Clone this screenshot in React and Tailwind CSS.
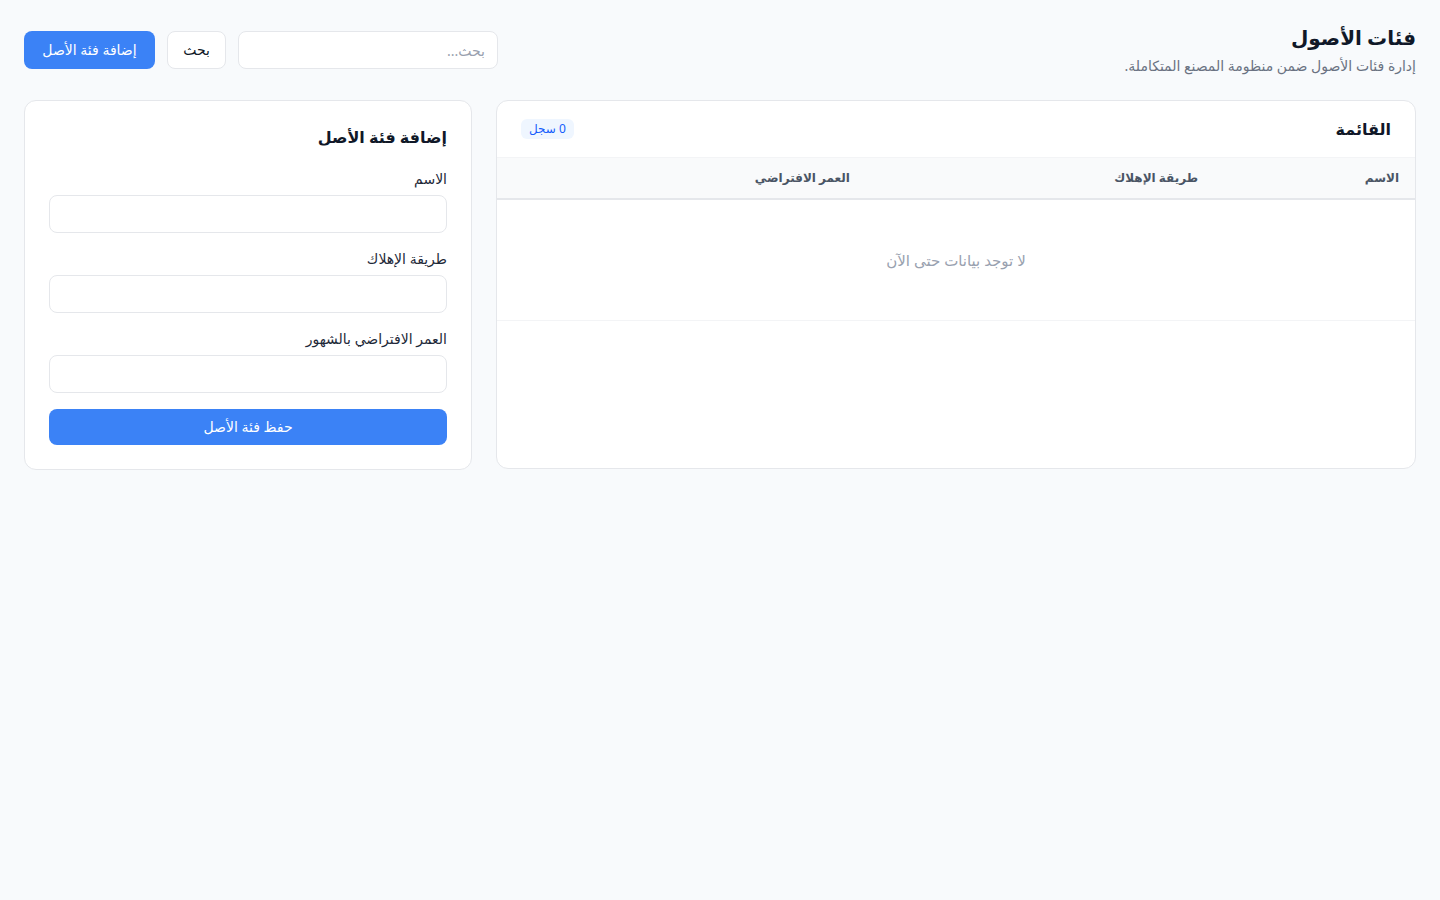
import React from 'react';

const Field = ({ label }) => (
  <div className="flex flex-col gap-1.5">
    <label className="text-sm leading-5 text-gray-800">{label}</label>
    <input className="h-[38px] w-full rounded-lg border border-gray-200 bg-white px-3 text-sm outline-none" />
  </div>
);

export default function App() {
  return (
    <div
      dir="rtl"
      className="min-h-screen bg-[#f8fafc] p-6 text-gray-900"
      style={{ fontFamily: '"Noto Sans", "DejaVu Sans", sans-serif' }}
    >
      {/* Header */}
      <div className="flex items-start justify-between">
        <div className="flex flex-col gap-1">
          <h1 className="text-xl font-bold leading-7 text-gray-900">فئات الأصول</h1>
          <p className="text-sm leading-5 text-gray-500">إدارة فئات الأصول ضمن منظومة المصنع المتكاملة.</p>
        </div>
        <div className="flex items-center gap-3 pt-[7px]">
          <input
            placeholder="بحث..."
            className="h-[38px] w-[260px] rounded-lg border border-gray-200 bg-white px-3 text-sm outline-none placeholder:text-gray-400"
          />
          <button className="h-[38px] w-[59px] rounded-lg border border-gray-200 bg-white text-sm text-gray-900">بحث</button>
          <button className="h-[38px] w-[131px] rounded-lg bg-[#3b82f6] text-sm text-white">إضافة فئة الأصل</button>
        </div>
      </div>

      {/* Content */}
      <div className="mt-6 grid grid-cols-3 items-start gap-6">
        {/* List */}
        <div className="col-span-2 h-[369px] overflow-hidden rounded-xl border border-gray-200 bg-white">
          <div className="flex h-[56px] items-center justify-between px-6">
            <h2 className="text-base font-bold text-gray-900">القائمة</h2>
            <span className="rounded-md bg-blue-50 px-2 py-0.5 text-xs leading-4 text-blue-600">0 سجل</span>
          </div>
          <table className="w-full table-fixed text-right">
            <thead>
              <tr className="border-y border-gray-100 border-b-2 border-b-gray-200 bg-gray-50 text-xs text-gray-600">
                <th className="h-[41px] w-[201px] px-4 font-semibold">الاسم</th>
                <th className="w-[348px] px-4 font-semibold">طريقة الإهلاك</th>
                <th className="px-4 font-semibold">العمر الافتراضي</th>
              </tr>
            </thead>
            <tbody>
              <tr className="border-b border-gray-100">
                <td colSpan={3} className="h-[122px] text-center text-[15px] text-gray-400">
                  لا توجد بيانات حتى الآن
                </td>
              </tr>
            </tbody>
          </table>
        </div>

        {/* Form */}
        <div className="rounded-xl border border-gray-200 bg-white p-6">
          <h2 className="mb-5 text-base font-bold leading-6 text-gray-900">إضافة فئة الأصل</h2>
          <div className="flex flex-col gap-4">
            <Field label="الاسم" />
            <Field label="طريقة الإهلاك" />
            <Field label="العمر الافتراضي بالشهور" />
            <button className="h-9 w-full rounded-lg bg-[#3b82f6] text-sm text-white">حفظ فئة الأصل</button>
          </div>
        </div>
      </div>
    </div>
  );
}
